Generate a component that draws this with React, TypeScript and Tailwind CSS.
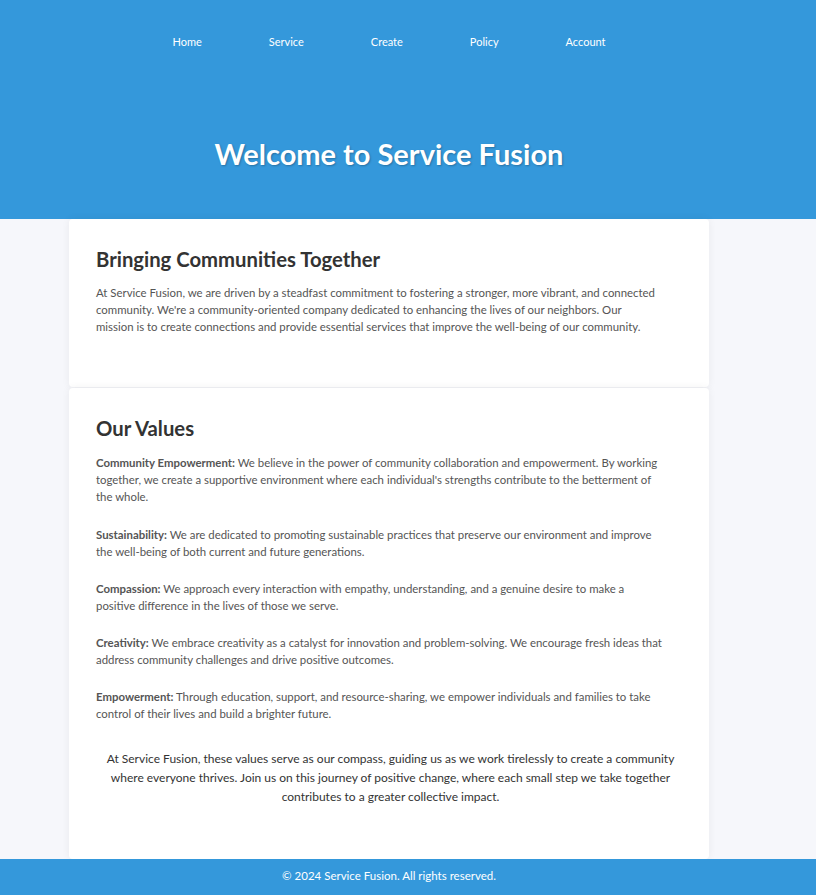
import React from "react";

const values: { t: string; lines: string[] }[] = [
  {
    t: "Community Empowerment:",
    lines: [
      " We believe in the power of community collaboration and empowerment. By working",
      "together, we create a supportive environment where each individual's strengths contribute to the betterment of",
      "the whole.",
    ],
  },
  {
    t: "Sustainability:",
    lines: [
      " We are dedicated to promoting sustainable practices that preserve our environment and improve",
      "the well-being of both current and future generations.",
    ],
  },
  {
    t: "Compassion:",
    lines: [
      " We approach every interaction with empathy, understanding, and a genuine desire to make a",
      "positive difference in the lives of those we serve.",
    ],
  },
  {
    t: "Creativity:",
    lines: [
      " We embrace creativity as a catalyst for innovation and problem-solving. We encourage fresh ideas that",
      "address community challenges and drive positive outcomes.",
    ],
  },
  {
    t: "Empowerment:",
    lines: [
      " Through education, support, and resource-sharing, we empower individuals and families to take",
      "control of their lives and build a brighter future.",
    ],
  },
];

function Lines({ lines }: { lines: string[] }) {
  return (
    <>
      {lines.map((l, i) => (
        <React.Fragment key={i}>
          {i > 0 && <br />}
          {l}
        </React.Fragment>
      ))}
    </>
  );
}

export default function App() {
  return (
    <div
      className="min-h-[895px] bg-[#f6f7fb] flex flex-col"
      style={{ fontFamily: "Lato, 'Open Sans', sans-serif" }}
    >
      <header className="bg-[#3498db] h-[219px] flex flex-col">
        <div className="w-[778px]">
          <nav className="flex justify-center gap-[67px] pt-[34px] text-[11px] leading-[16px] text-white">
            <span>Home</span>
            <span>Service</span>
            <span>Create</span>
            <span>Policy</span>
            <span>Account</span>
          </nav>
          <h1 className="mt-[84px] text-center text-[29px] leading-[40px] font-bold text-white [text-shadow:1px_1px_2px_rgba(0,0,0,0.25)]">
            Welcome to Service Fusion
          </h1>
        </div>
      </header>
      <main className="flex-1 w-[778px] flex flex-col items-center">
        <section className="w-[640px] bg-white rounded-[4px] shadow-[0_0_8px_rgba(0,0,0,0.06)] pl-[27px] pr-[18px] pt-[27px] pb-[52px]">
          <h2 className="text-[20.3px] leading-[26px] font-bold text-[#333]">
            Bringing Communities Together
          </h2>
          <p className="mt-[12px] text-[11.4px] leading-[17px] text-[#555]">
            <Lines
              lines={[
                "At Service Fusion, we are driven by a steadfast commitment to fostering a stronger, more vibrant, and connected",
                "community. We're a community-oriented company dedicated to enhancing the lives of our neighbors. Our",
                "mission is to create connections and provide essential services that improve the well-being of our community.",
              ]}
            />
          </p>
        </section>
        <section className="mt-[1px] w-[640px] bg-white rounded-[4px] shadow-[0_0_8px_rgba(0,0,0,0.06)] pl-[27px] pr-[18px] pt-[27px] pb-[53px]">
          <h2 className="text-[20.3px] leading-[26px] font-bold text-[#333]">Our Values</h2>
          <div className="mt-[13px] flex flex-col gap-[20px]">
            {values.map((v, i) => (
              <p key={v.t} className={`text-[11.4px] leading-[17px] text-[#555] ${i === 0 ? "mb-[1px]" : ""}`}>
                <strong className="font-bold">{v.t}</strong>
                <Lines lines={v.lines} />
              </p>
            ))}
          </div>
          <p className="mt-[27px] -ml-[3px] mr-[3px] text-center text-[12px] leading-[19px] text-[#333]">
            At Service Fusion, these values serve as our compass, guiding us as we work tirelessly to create a community
            <br />
            where everyone thrives. Join us on this journey of positive change, where each small step we take together
            <br />
            contributes to a greater collective impact.
          </p>
        </section>
      </main>
      <footer className="bg-[#3498db] h-[37px] flex items-center pb-[3px]">
        <p className="w-[778px] text-center text-[11.5px] leading-[16px] text-white">
          © 2024 Service Fusion. All rights reserved.
        </p>
      </footer>
    </div>
  );
}
